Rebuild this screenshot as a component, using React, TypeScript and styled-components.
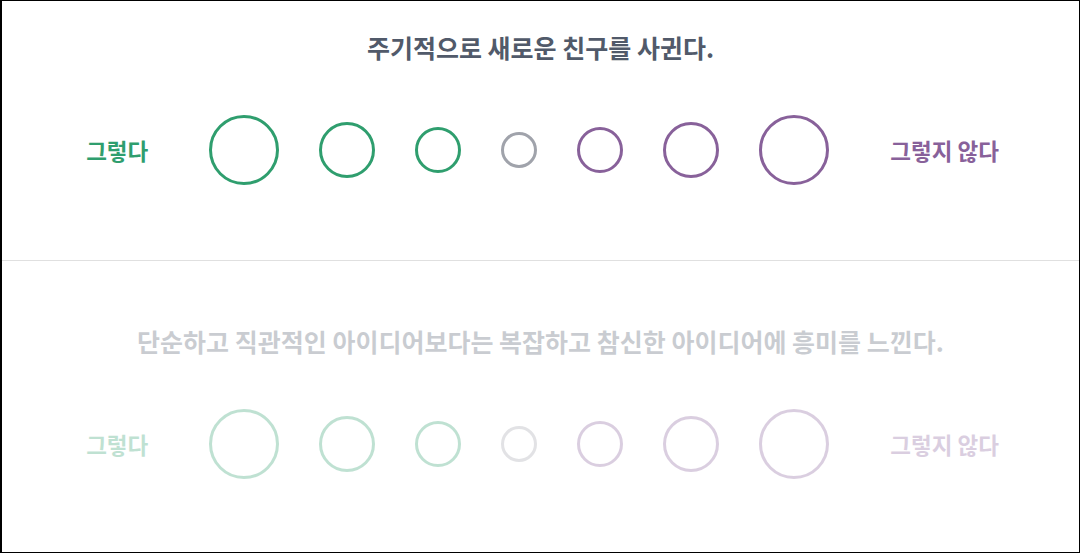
import React from "react";
import styled, { createGlobalStyle } from "styled-components";

const GlobalStyle = createGlobalStyle`
  html, body {
    margin: 0;
    padding: 0;
    background: #fff;
  }
  body {
    font-family: "Noto Sans CJK KR", "Noto Sans", sans-serif;
  }
  * {
    box-sizing: border-box;
  }
`;

const Frame = styled.main`
  height: 100vh;
  border: 1px solid #000;
  border-left-width: 2px;
  overflow: hidden;
  background: #fff;
`;

const Question = styled.section<{ $top: number; $dim?: boolean }>`
  display: flex;
  flex-direction: column;
  align-items: center;
  gap: 50px;
  padding: ${(p) => p.$top}px 0 75px;
  border-bottom: 1px solid #e0e0e0;
  opacity: ${(p) => (p.$dim ? 0.3 : 1)};
`;

const Title = styled.h2`
  margin: 0;
  font-size: 25px;
  line-height: 36px;
  font-weight: 700;
  color: #515a6a;
  text-align: center;
`;

const Scale = styled.div`
  display: flex;
  align-items: center;
  gap: 61px;
  padding-left: 4px;
`;

const Label = styled.span<{ $color: string }>`
  font-size: 22.5px;
  font-weight: 700;
  color: ${(p) => p.$color};
  white-space: nowrap;
`;

const Options = styled.div`
  display: flex;
  align-items: center;
  gap: 40px;
`;

const Option = styled.button<{ $size: number; $color: string }>`
  width: ${(p) => p.$size}px;
  height: ${(p) => p.$size}px;
  border-radius: 50%;
  border: 3px solid ${(p) => p.$color};
  background: transparent;
  padding: 0;
  cursor: pointer;
`;

const GREEN = "#2f9e6e";
const PURPLE = "#88619a";
const GRAY = "#a0a3ab";

const options = [
  { size: 70, color: GREEN },
  { size: 56, color: GREEN },
  { size: 46, color: GREEN },
  { size: 36, color: GRAY },
  { size: 46, color: PURPLE },
  { size: 56, color: PURPLE },
  { size: 70, color: PURPLE },
];

const questions = [
  { text: "주기적으로 새로운 친구를 사귄다.", top: 28 },
  {
    text: "단순하고 직관적인 아이디어보다는 복잡하고 참신한 아이디어에 흥미를 느낀다.",
    top: 62,
    dim: true,
  },
];

const App = () => {
  return (
    <>
      <GlobalStyle />
      <Frame>
        {questions.map((q) => (
          <Question key={q.text} $top={q.top} $dim={q.dim}>
            <Title>{q.text}</Title>
            <Scale>
              <Label $color={GREEN}>그렇다</Label>
              <Options>
                {options.map((o, i) => (
                  <Option key={i} $size={o.size} $color={o.color} />
                ))}
              </Options>
              <Label $color={PURPLE}>그렇지 않다</Label>
            </Scale>
          </Question>
        ))}
      </Frame>
    </>
  );
};

export default App;
